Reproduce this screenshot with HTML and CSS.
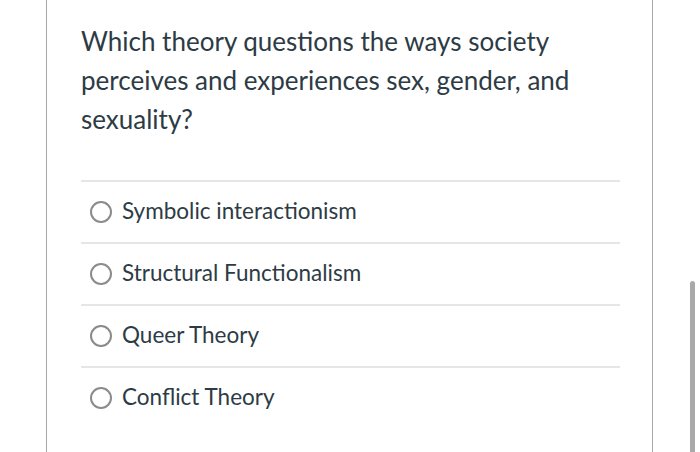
FILE: index.html
```html
<!DOCTYPE html>
<html>
<head>
<meta charset="utf-8">
<link rel="stylesheet" href="styles.css">
</head>
<body>
<div class="page">
  <div class="card">
    <p class="question">Which theory questions the ways society perceives and experiences sex, gender, and sexuality?</p>
    <div class="answers">
      <label class="answer"><span class="radio"></span><span class="label">Symbolic interactionism</span></label>
      <label class="answer"><span class="radio"></span><span class="label">Structural Functionalism</span></label>
      <label class="answer"><span class="radio"></span><span class="label">Queer Theory</span></label>
      <label class="answer"><span class="radio"></span><span class="label">Conflict Theory</span></label>
    </div>
  </div>
</div>
<div class="scrollbar"></div>
</body>
</html>
```
FILE: styles.css
```css
html, body {
  margin: 0;
  padding: 0;
  background: #ffffff;
  overflow: hidden;
}
body {
  font-family: Lato, "Liberation Sans", sans-serif;
  color: #2d3b45;
}
.page {
  padding-left: 46px;
  height: 452px;
}
.card {
  width: 607px;
  height: 452px;
  box-sizing: border-box;
  border-left: 1px solid #a8a8a8;
  border-right: 1px solid #a8a8a8;
  padding: 22px 32px 0 34px;
}
.question {
  margin: 0 0 41px 0;
  font-size: 26px;
  line-height: 39px;
  width: 520px;
}
.answers {
  display: flex;
  flex-direction: column;
}
.answer {
  display: flex;
  align-items: center;
  gap: 10px;
  height: 60px;
  border-top: 2px solid #e6e6e6;
  padding-left: 9px;
}
.radio {
  width: 18px;
  height: 18px;
  border: 2px solid #8b8b8b;
  border-radius: 50%;
  flex: none;
}
.label {
  font-size: 22.5px;
  line-height: 28px;
  padding-bottom: 2px;
}
.scrollbar {
  position: fixed;
  left: 690px;
  top: 281px;
  width: 5px;
  height: 180px;
  background: #a9a9a9;
  border-radius: 3px 3px 0 0;
}
```
